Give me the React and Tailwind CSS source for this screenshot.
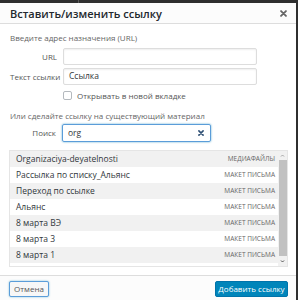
import React from 'react';

const rows = [
  { title: 'Organizaciya-deyatelnosti', type: 'Медиафайлы' },
  { title: 'Рассылка по списку_Альянс', type: 'Макет письма' },
  { title: 'Переход по ссылке', type: 'Макет письма' },
  { title: 'Альянс', type: 'Макет письма' },
  { title: '8 марта ВЭ', type: 'Макет письма' },
  { title: '8 марта 3', type: 'Макет письма' },
  { title: '8 марта 1', type: 'Макет письма' },
  { title: '', type: '' },
];

const App = () => {
  return (
    <div className="w-[298px] h-[300px] bg-[#2f2f2f] overflow-hidden font-['Open_Sans','Liberation_Sans',sans-serif] relative">
      <div className="absolute left-[78px] top-0 w-px h-[3px] bg-[#5a5a5a]" />
      <div className="mt-[3px] w-[296px] h-[297px] bg-white flex flex-col">
        {/* header */}
        <div className="h-[21px] shrink-0 bg-[#fcfcfc] border-b border-[#dddddd] flex items-center justify-between pl-[10px] pr-[9px]">
          <span className="text-[11px] font-semibold text-[#23282d] leading-none">Вставить/изменить ссылку</span>
          <svg width="7" height="7" viewBox="0 0 10 10" className="text-[#666]">
            <path d="M1.5 1.5 L8.5 8.5 M8.5 1.5 L1.5 8.5" stroke="currentColor" strokeWidth="2.6" strokeLinecap="round" />
          </svg>
        </div>

        {/* body */}
        <div className="px-[10px] flex flex-col">
          <div className="mt-[8px] text-[8px] leading-[12px] text-[#666]">Введите адрес назначения (URL)</div>

          <div className="mt-[4px] flex items-center h-[17px]">
            <span className="w-[47px] text-right text-[8px] text-[#555]">URL</span>
            <div className="ml-[6px] w-[194px] h-[17px] border border-[#dddddd] rounded-[2px] shadow-[inset_0_1px_2px_rgba(0,0,0,0.07)]" />
          </div>

          <div className="mt-[3px] flex items-center h-[17px]">
            <span className="w-[47px] text-right text-[8px] text-[#555] whitespace-nowrap">Текст ссылки</span>
            <div className="ml-[6px] w-[194px] h-[17px] border border-[#dddddd] rounded-[2px] shadow-[inset_0_1px_2px_rgba(0,0,0,0.07)] flex items-center pl-[5px] text-[8.5px] text-[#32373c]">
              Ссылка
            </div>
          </div>

          <div className="mt-[6px] flex items-center h-[9px] pl-[53px]">
            <div className="w-[9px] h-[9px] border border-[#b4b9be] rounded-[2px] bg-white" />
            <span className="ml-[5px] text-[8px] text-[#555] leading-none">Открывать в новой вкладке</span>
          </div>

          <div className="mt-[10px] text-[8px] leading-[12px] text-[#666]">Или сделайте ссылку на существующий материал</div>

          <div className="mt-[2px] flex items-center h-[18px]">
            <span className="w-[46px] text-right text-[8px] text-[#555]">Поиск</span>
            <div className="ml-[6px] w-[149px] h-[18px] border border-[#5b9dd9] rounded-[2px] shadow-[0_0_2px_rgba(30,140,190,0.8)] flex items-center justify-between pl-[5px] pr-[6px]">
              <span className="text-[8.5px] text-[#32373c] leading-none">org</span>
              <svg width="6" height="6" viewBox="0 0 10 10" className="text-[#2e4f74]">
                <path d="M1.5 1.5 L8.5 8.5 M8.5 1.5 L1.5 8.5" stroke="currentColor" strokeWidth="2.6" strokeLinecap="round" />
              </svg>
            </div>
          </div>

          {/* results */}
          <div className="mt-[8px] -ml-px w-[279px] h-[117px] border border-[#e5e5e5] flex overflow-hidden">
            <div className="flex-1 flex flex-col">
              {rows.map((r, i) => (
                <div
                  key={i}
                  className={`h-[16px] shrink-0 flex items-center justify-between pl-[6px] pr-[3px] ${i % 2 === 0 ? 'bg-[#f1f1f1]' : 'bg-white'}`}
                >
                  <span className="text-[8.5px] text-[#32373c] leading-none">{r.title}</span>
                  <span className="text-[6.5px] uppercase text-[#666] leading-none">{r.type}</span>
                </div>
              ))}
            </div>
            <div className="w-[9px] shrink-0 bg-[#f1f1f1] flex flex-col items-center">
              <svg width="5" height="9" viewBox="0 0 5 9" className="shrink-0 text-[#a3a3a3]">
                <path d="M1 5.5 L2.5 4 L4 5.5" stroke="currentColor" strokeWidth="1" fill="none" />
              </svg>
              <div className="w-[8px] flex-1 bg-[#c1c1c1] mb-[1px]" />
              <svg width="5" height="9" viewBox="0 0 5 9" className="shrink-0 text-[#505050]">
                <path d="M1 3.5 L2.5 5 L4 3.5" stroke="currentColor" strokeWidth="1" fill="none" />
              </svg>
            </div>
          </div>
        </div>

        {/* footer */}
        <div className="mt-auto h-[25px] border-t border-[#dddddd] bg-[#fcfcfc] flex items-start justify-between pt-[5px] pl-[9px] pr-[8px]">
          <button className="w-[40px] h-[16px] border border-[#5b9dd9] bg-[#f7f7f7] rounded-[2px] shadow-[0_0_2px_rgba(30,140,190,0.6)] text-[8px] text-[#555] flex items-center justify-center leading-none">
            Отмена
          </button>
          <button className="w-[73px] h-[16px] border border-[#0073aa] bg-[#0085ba] rounded-[2px] text-[8px] text-white flex items-center justify-center leading-none">
            Добавить ссылку
          </button>
        </div>
      </div>
    </div>
  );
};

export default App;
